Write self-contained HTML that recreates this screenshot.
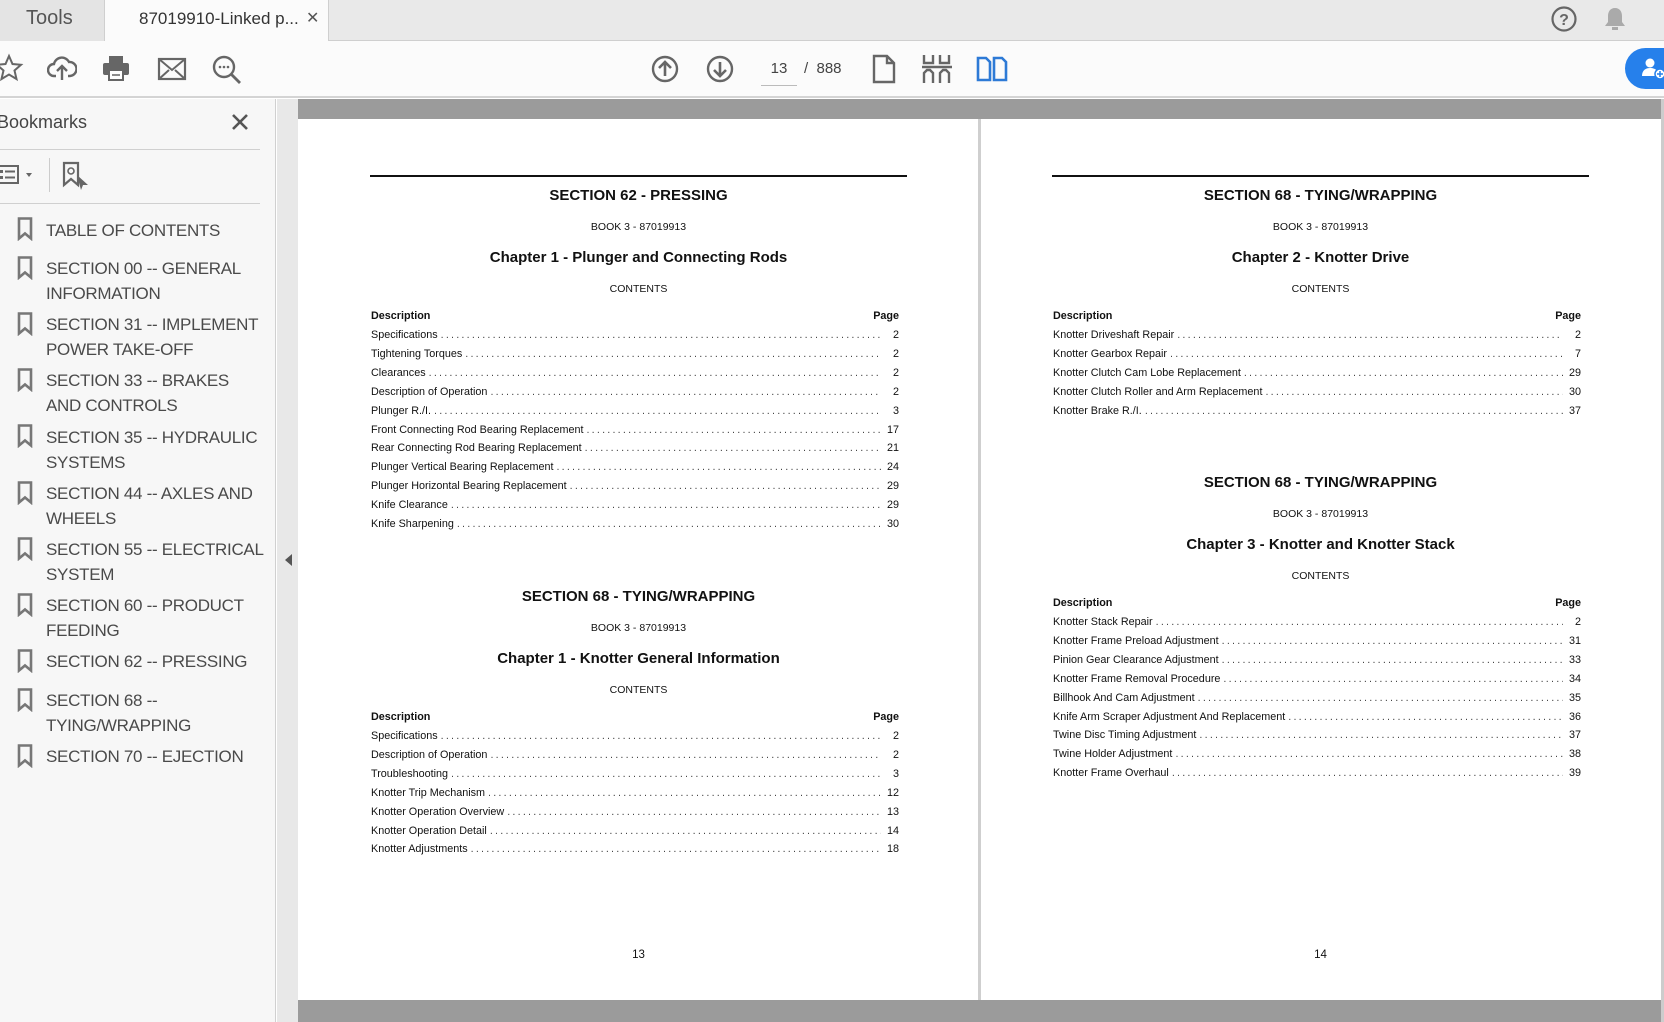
<!DOCTYPE html>
<html><head><meta charset="utf-8">
<style>
*{margin:0;padding:0;box-sizing:border-box}
body{width:1664px;height:1022px;overflow:hidden;background:#fff;font-family:"Liberation Sans",sans-serif;position:relative}
.a{position:absolute}
.tabbar{left:0;top:0;width:1664px;height:41px;background:#e9e9e9;border-bottom:1px solid #cfcfcf}
.toolbar{left:0;top:41px;width:1664px;height:57px;background:#fbfbfb;border-bottom:2px solid #d4d4d4}
.side{left:0;top:99px;width:276px;height:923px;background:#f7f7f7;border-right:1px solid #d0d0d0}
.gut{left:277px;top:99px;width:21px;height:923px;background:#e8e8e8}
.bm{left:46px;font-size:17px;letter-spacing:-0.3px;color:#4a4a4a;line-height:25px;white-space:nowrap}
.bi{left:17px}
.pg{font-family:"Liberation Sans",sans-serif;color:#111}
.t1{font-size:15px;font-weight:bold;text-align:center;width:537px}
.t2{font-size:10.5px;text-align:center;width:537px}
.row{width:528px;height:14px;font-size:10.8px;display:flex;white-space:nowrap;overflow:hidden;line-height:14px}
.row .d{flex:1;overflow:hidden;color:#444;letter-spacing:2.2px;padding:0 3px}
.row .n{min-width:18px;padding-left:4px;text-align:right}
</style></head><body>
<div class="a tabbar"></div>
<div class="a" style="left:0;top:0;width:105px;height:41px;background:#e4e4e4;border-right:1px solid #cfcfcf"></div>
<div class="a" style="left:26px;top:7px;font-size:20px;color:#555">Tools</div>
<div class="a" style="left:105px;top:0;width:224px;height:42px;background:#fbfbfb;border-right:1px solid #cfcfcf"></div>
<div class="a" style="left:139px;top:9px;font-size:17px;color:#333">87019910-Linked p...</div>
<div class="a" style="left:306px;top:8px;font-size:16px;color:#555">✕</div>
<svg class="a" style="left:1550px;top:5px" width="28" height="28" viewBox="0 0 28 28"><circle cx="14" cy="14" r="11.5" fill="none" stroke="#666" stroke-width="2.2"/><text x="14" y="20" font-size="16" font-weight="bold" text-anchor="middle" fill="#666" font-family="Liberation Sans">?</text></svg>
<svg class="a" style="left:1602px;top:5px" width="26" height="28" viewBox="0 0 26 28"><path d="M13 3c-5 0-7 4-7 8v6l-3 4h20l-3-4v-6c0-4-2-8-7-8z" fill="#aaa"/><rect x="10" y="22" width="6" height="3" fill="#aaa"/></svg>

<div class="a toolbar"></div>
<svg class="a" style="left:-6px;top:53px" width="30" height="30" viewBox="0 0 30 30"><path d="M15 3l3.5 8 8.5.8-6.5 5.7 2 8.5-7.5-4.5-7.5 4.5 2-8.5L3 11.8l8.5-.8z" fill="none" stroke="#666" stroke-width="2"/></svg>
<svg class="a" style="left:47px;top:54px" width="30" height="30" viewBox="0 0 30 30"><path d="M9 22H7a6 6 0 0 1 0-12 8 8 0 0 1 15-2 6 6 0 0 1 1 14h-2" fill="none" stroke="#666" stroke-width="2.4"/><path d="M15 26V13M10 17l5-5 5 5" fill="none" stroke="#666" stroke-width="2.4"/></svg>
<svg class="a" style="left:101px;top:54px" width="30" height="30" viewBox="0 0 30 30"><rect x="8" y="2" width="14" height="7" fill="#666"/><rect x="2" y="9" width="26" height="12" rx="2" fill="#666"/><rect x="8" y="16" width="14" height="10" fill="#fff" stroke="#666" stroke-width="2"/><line x1="11" y1="21" x2="19" y2="21" stroke="#666" stroke-width="1.5"/></svg>
<svg class="a" style="left:157px;top:56px" width="30" height="26" viewBox="0 0 30 26"><rect x="2" y="3" width="26" height="20" fill="none" stroke="#666" stroke-width="2.2"/><path d="M2 3l13 11 13-11M2 23l10-9M28 23l-10-9" fill="none" stroke="#666" stroke-width="2"/></svg>
<svg class="a" style="left:211px;top:54px" width="32" height="32" viewBox="0 0 32 32"><circle cx="13" cy="13" r="10" fill="none" stroke="#666" stroke-width="2.4"/><path d="M20 20l9 9" stroke="#666" stroke-width="2.8"/><circle cx="9" cy="13" r="1.3" fill="#666"/><circle cx="13" cy="13" r="1.3" fill="#666"/><circle cx="17" cy="13" r="1.3" fill="#666"/></svg>

<svg class="a" style="left:651px;top:55px" width="28" height="28" viewBox="0 0 28 28"><circle cx="14" cy="14" r="12" fill="none" stroke="#666" stroke-width="2.4"/><path d="M14 21V8M8 13l6-6 6 6" fill="none" stroke="#666" stroke-width="2.6"/></svg>
<svg class="a" style="left:706px;top:55px" width="28" height="28" viewBox="0 0 28 28"><circle cx="14" cy="14" r="12" fill="none" stroke="#666" stroke-width="2.4"/><path d="M14 7v13M8 15l6 6 6-6" fill="none" stroke="#666" stroke-width="2.6"/></svg>
<div class="a" style="left:761px;top:60px;width:36px;text-align:center;font-size:15px;color:#444">13</div>
<div class="a" style="left:761px;top:85px;width:36px;height:1px;background:#bbb"></div>
<div class="a" style="left:804px;top:60px;font-size:15px;color:#444">/ &nbsp;888</div>
<svg class="a" style="left:871px;top:54px" width="26" height="30" viewBox="0 0 26 30"><path d="M3 2h13l7 7v19H3z M16 2v7h7" fill="none" stroke="#666" stroke-width="2.4"/></svg>
<svg class="a" style="left:921px;top:53px" width="32" height="32" viewBox="0 0 32 32"><path d="M3 2v8h9V2M19 2v8h9V2M1 14h30M3 30V20l3-3h3l3 3v10M19 30V20l3-3h3l3 3v10" fill="none" stroke="#666" stroke-width="2.4"/></svg>
<svg class="a" style="left:976px;top:55px" width="32" height="28" viewBox="0 0 32 28"><path d="M2 3h8l4 4v18H2zM18 3h8l4 4v18H18z" fill="none" stroke="#2d7ad6" stroke-width="2.6"/></svg>
<div class="a" style="left:1625px;top:48px;width:60px;height:41px;border-radius:21px;background:#2680eb"></div>
<svg class="a" style="left:1642px;top:57px" width="24" height="24" viewBox="0 0 24 24"><circle cx="8" cy="6" r="4.5" fill="#fff"/><path d="M0 19c0-6 4-8 8-8s7 2 8 4v4z" fill="#fff"/><circle cx="18" cy="17" r="5" fill="#fff" stroke="#2680eb" stroke-width="1.5"/><path d="M18 14v6M15 17h6" stroke="#2680eb" stroke-width="1.5"/></svg>

<div class="a side"></div>
<div class="a" style="left:-3px;top:112px;font-size:18px;color:#444">Bookmarks</div>
<svg class="a" style="left:231px;top:113px" width="18" height="18" viewBox="0 0 18 18"><path d="M2 2l14 14M16 2L2 16" stroke="#555" stroke-width="2.6"/></svg>
<div class="a" style="left:0;top:149px;width:260px;height:1px;background:#d0d0d0"></div>
<svg class="a" style="left:-4px;top:164px" width="42" height="22" viewBox="0 0 42 22"><rect x="1" y="2" width="21" height="17" fill="none" stroke="#666" stroke-width="2"/><rect x="4" y="6" width="3" height="3" fill="#666"/><rect x="4" y="12" width="3" height="3" fill="#666"/><path d="M9 7.5h10M9 13.5h10" stroke="#666" stroke-width="2"/><path d="M30 9h6l-3 4z" fill="#666"/></svg>
<div class="a" style="left:49px;top:158px;width:1px;height:34px;background:#ccc"></div>
<svg class="a" style="left:62px;top:161px" width="28" height="30" viewBox="0 0 28 30"><path d="M2 2h14v22l-7-6-7 6z" fill="none" stroke="#666" stroke-width="2.2"/><circle cx="9" cy="10" r="3" fill="none" stroke="#666" stroke-width="1.6"/><path d="M15 14l11 10-5 0 -2 5z" fill="#666"/></svg>
<div class="a" style="left:0;top:203px;width:260px;height:1px;background:#d0d0d0"></div>

<svg width="0" height="0" style="position:absolute"><defs><symbol id="bk" viewBox="0 0 16 24"><path d="M2 1.5h12v20l-6-5-6 5z" fill="none" stroke="#777" stroke-width="2.6"/></symbol></defs></svg>
<svg class="a bi" style="top:217px" width="16" height="24"><use href="#bk"/></svg><div class="a bm" style="top:218px">TABLE OF CONTENTS</div>
<svg class="a bi" style="top:256px" width="16" height="24"><use href="#bk"/></svg><div class="a bm" style="top:256px">SECTION 00 -- GENERAL<br>INFORMATION</div>
<svg class="a bi" style="top:312px" width="16" height="24"><use href="#bk"/></svg><div class="a bm" style="top:312px">SECTION 31 -- IMPLEMENT<br>POWER TAKE-OFF</div>
<svg class="a bi" style="top:368px" width="16" height="24"><use href="#bk"/></svg><div class="a bm" style="top:368px">SECTION 33 -- BRAKES<br>AND CONTROLS</div>
<svg class="a bi" style="top:424px" width="16" height="24"><use href="#bk"/></svg><div class="a bm" style="top:425px">SECTION 35 -- HYDRAULIC<br>SYSTEMS</div>
<svg class="a bi" style="top:481px" width="16" height="24"><use href="#bk"/></svg><div class="a bm" style="top:481px">SECTION 44 -- AXLES AND<br>WHEELS</div>
<svg class="a bi" style="top:537px" width="16" height="24"><use href="#bk"/></svg><div class="a bm" style="top:537px">SECTION 55 -- ELECTRICAL<br>SYSTEM</div>
<svg class="a bi" style="top:593px" width="16" height="24"><use href="#bk"/></svg><div class="a bm" style="top:593px">SECTION 60 -- PRODUCT<br>FEEDING</div>
<svg class="a bi" style="top:649px" width="16" height="24"><use href="#bk"/></svg><div class="a bm" style="top:649px">SECTION 62 -- PRESSING</div>
<svg class="a bi" style="top:688px" width="16" height="24"><use href="#bk"/></svg><div class="a bm" style="top:688px">SECTION 68 --<br>TYING/WRAPPING</div>
<svg class="a bi" style="top:744px" width="16" height="24"><use href="#bk"/></svg><div class="a bm" style="top:744px">SECTION 70 -- EJECTION</div>

<div class="a gut"></div>
<svg class="a" style="left:283px;top:553px" width="10" height="14" viewBox="0 0 10 14"><path d="M9 1L2 7l7 6z" fill="#555"/></svg>

<div class="a" style="left:298px;top:99px;width:1366px;height:20px;background:#9b9b9b"></div>
<div class="a" style="left:298px;top:1000px;width:1366px;height:22px;background:#9b9b9b"></div>
<div class="a" style="left:978px;top:119px;width:3px;height:881px;background:#cfcfcf"></div>
<div class="a" style="left:1661px;top:99px;width:3px;height:923px;background:#ccc"></div>

<div id="p"></div>
<script>
function blk(x,y,title,book,chap,rows){
 let h='';
 h+=`<div class="a pg t1" style="left:${x}px;top:${y+2}px">${title}</div>`;
 h+=`<div class="a pg t2" style="left:${x}px;top:${y+36}px">${book}</div>`;
 h+=`<div class="a pg t1" style="left:${x}px;top:${y+64}px">${chap}</div>`;
 h+=`<div class="a pg t2" style="left:${x}px;top:${y+98}px">CONTENTS</div>`;
 let ry=y+124;
 h+=`<div class="a pg row" style="left:${x+1}px;top:${ry}px;font-weight:bold"><span>Description</span><span style="flex:1"></span><span>Page</span></div>`;
 rows.forEach((r,i)=>{
  h+=`<div class="a pg row" style="left:${x+1}px;top:${ry+19+i*18.9}px"><span>${r[0]}</span><span class="d">${'.'.repeat(150)}</span><span class="n">${r[1]}</span></div>`;
 });
 return h;
}
let L=370,R=1052,o='';
o+=`<div class="a" style="left:${L}px;top:175px;width:537px;height:2px;background:#111"></div>`;
o+=`<div class="a" style="left:${R}px;top:175px;width:537px;height:2px;background:#111"></div>`;
o+=blk(L,185,'SECTION 62 - PRESSING','BOOK 3 - 87019913','Chapter 1 - Plunger and Connecting Rods',[["Specifications","2"],["Tightening Torques","2"],["Clearances","2"],["Description of Operation","2"],["Plunger R./I.","3"],["Front Connecting Rod Bearing Replacement","17"],["Rear Connecting Rod Bearing Replacement","21"],["Plunger Vertical Bearing Replacement","24"],["Plunger Horizontal Bearing Replacement","29"],["Knife Clearance","29"],["Knife Sharpening","30"]]);
o+=blk(L,586,'SECTION 68 - TYING/WRAPPING','BOOK 3 - 87019913','Chapter 1 - Knotter General Information',[["Specifications","2"],["Description of Operation","2"],["Troubleshooting","3"],["Knotter Trip Mechanism","12"],["Knotter Operation Overview","13"],["Knotter Operation Detail","14"],["Knotter Adjustments","18"]]);
o+=blk(R,185,'SECTION 68 - TYING/WRAPPING','BOOK 3 - 87019913','Chapter 2 - Knotter Drive',[["Knotter Driveshaft Repair","2"],["Knotter Gearbox Repair","7"],["Knotter Clutch Cam Lobe Replacement","29"],["Knotter Clutch Roller and Arm Replacement","30"],["Knotter Brake R./I.","37"]]);
o+=blk(R,472,'SECTION 68 - TYING/WRAPPING','BOOK 3 - 87019913','Chapter 3 - Knotter and Knotter Stack',[["Knotter Stack Repair","2"],["Knotter Frame Preload Adjustment","31"],["Pinion Gear Clearance Adjustment","33"],["Knotter Frame Removal Procedure","34"],["Billhook And Cam Adjustment","35"],["Knife Arm Scraper Adjustment And Replacement","36"],["Twine Disc Timing Adjustment","37"],["Twine Holder Adjustment","38"],["Knotter Frame Overhaul","39"]]);
o+=`<div class="a pg t2" style="left:${L}px;top:949px;font-size:11.5px">13</div>`;
o+=`<div class="a pg t2" style="left:${R}px;top:949px;font-size:11.5px">14</div>`;
document.getElementById('p').innerHTML=o;
</script>
</body></html>
